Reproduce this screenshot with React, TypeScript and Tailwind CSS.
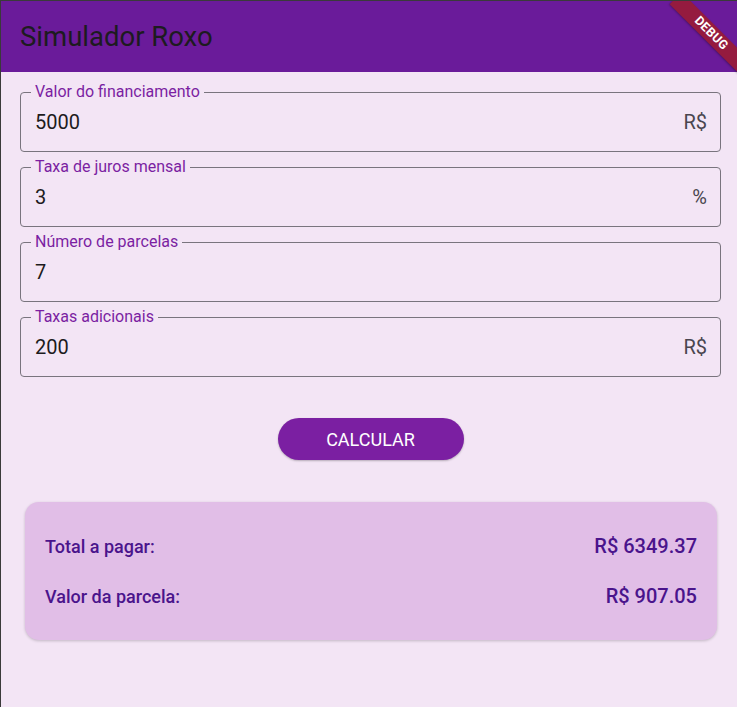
import React from "react";

type Field = { label: string; value: string; suffix?: string };

const fields: Field[] = [
  { label: "Valor do financiamento", value: "5000", suffix: "R$" },
  { label: "Taxa de juros mensal", value: "3", suffix: "%" },
  { label: "Número de parcelas", value: "7" },
  { label: "Taxas adicionais", value: "200", suffix: "R$" },
];

function OutlinedField({ label, value, suffix }: Field) {
  return (
    <div className="relative h-[60px] rounded-[4px] border border-[#79747e] flex items-center pl-[14px] pr-[13px]">
      <span className="absolute left-[10px] top-[-10px] px-[4px] bg-[#f3e5f5] text-[16px] leading-[18px] text-[#7b1fa2]">
        {label}
      </span>
      <span className="flex-1 text-[20px] text-[#1d1b20]">{value}</span>
      {suffix && <span className="text-[20px] text-[#49454f]">{suffix}</span>}
    </div>
  );
}

export default function App() {
  return (
    <div
      className="relative h-[707px] w-[737px] overflow-hidden bg-[#f3e5f5] border-l border-t border-[#3a3a3a]"
      style={{ fontFamily: "Roboto, 'Noto Sans', sans-serif" }}
    >
      <header className="h-[71px] bg-[#6a1b9a] flex items-center pl-[19px]">
        <h1 className="text-[27.5px] font-normal text-[#1d1b20]">Simulador Roxo</h1>
      </header>

      <div className="absolute top-[24px] left-[660px] w-[100px] h-[17px] rotate-45 bg-[#951b3f] flex items-center justify-center shadow-[0_1px_2px_rgba(0,0,0,0.3)]">
        <span className="text-[12.5px] font-bold tracking-[0.3px] text-white leading-none">DEBUG</span>
      </div>

      <main className="pl-[19px] pr-[16px] pt-[20px] flex flex-col">
        <div className="flex flex-col gap-[15px]">
          {fields.map((f) => (
            <OutlinedField key={f.label} {...f} />
          ))}
        </div>

        <div className="flex justify-center mt-[41px]">
          <button className="w-[186px] h-[42px] rounded-full bg-[#7b1fa2] text-white text-[18px] font-normal shadow-[0_1px_2px_rgba(0,0,0,0.25)]">
            CALCULAR
          </button>
        </div>

        <div className="ml-[5px] mr-[4px] mt-[42px] h-[138px] rounded-[14px] bg-[#e1bee7] shadow-[0_1px_3px_rgba(0,0,0,0.2)] pl-[20px] pr-[20px] flex flex-col justify-center gap-[20px] text-[#4a148c]">
          <div className="flex items-center justify-between">
            <span className="text-[18px] font-medium">Total a pagar:</span>
            <span className="text-[20px] font-medium">R$ 6349.37</span>
          </div>
          <div className="flex items-center justify-between">
            <span className="text-[18px] font-medium">Valor da parcela:</span>
            <span className="text-[20px] font-medium">R$ 907.05</span>
          </div>
        </div>
      </main>
    </div>
  );
}
